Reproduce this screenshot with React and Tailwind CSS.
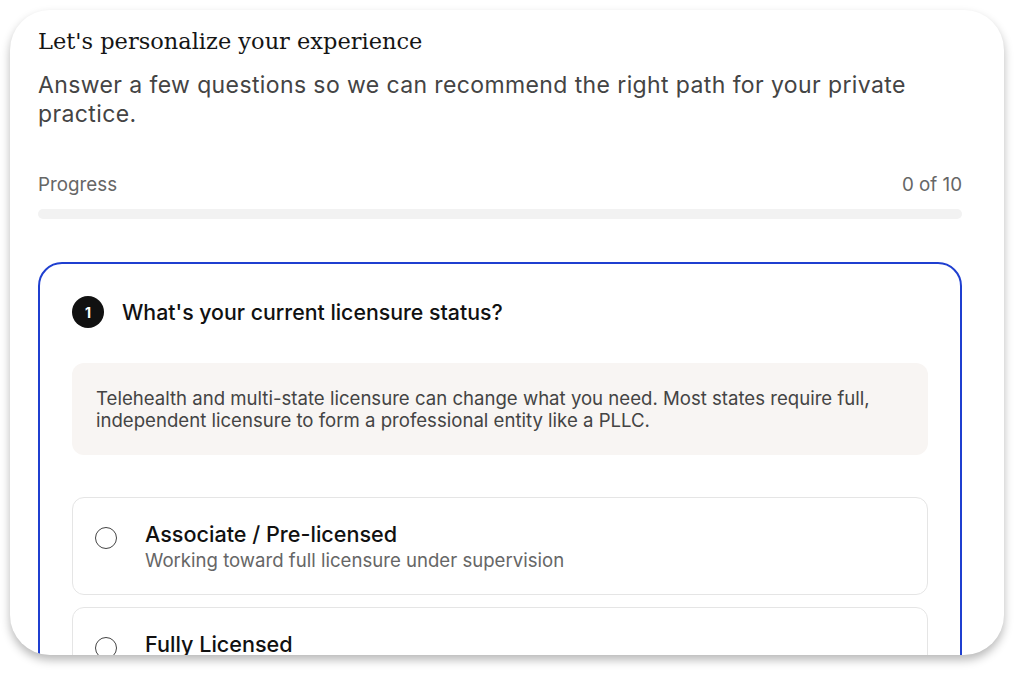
export default function App() {
  const opcoes = [
    { titulo: "Associate / Pre-licensed", desc: "Working toward full licensure under supervision" },
    { titulo: "Fully Licensed", desc: "Independent licensure in at least one state" },
  ];

  return (
    <div className="w-[1014px] h-[675px] bg-white pt-[10px] px-[10px]" style={{ fontFamily: "Inter, 'Noto Sans', sans-serif" }}>
      <div className="h-[645px] rounded-[40px] bg-white overflow-hidden shadow-[0_5px_10px_rgba(0,0,0,0.28)] pl-[28px] pr-[42px] pt-[17px]">
        <h1 className="text-[22.5px] leading-[28px] text-[#151515]" style={{ fontFamily: "'DejaVu Serif', serif" }}>
          Let's personalize your experience
        </h1>
        <p className="mt-[16px] text-[23px] leading-[29px] tracking-[0.017em] text-[#444]">
          Answer a few questions so we can recommend the right path for your private practice.
        </p>

        <div className="mt-[44px] flex justify-between text-[18.8px] leading-[24px] text-[#666]">
          <span>Progress</span>
          <span>0 of 10</span>
        </div>
        <div className="mt-[12px] h-[10px] rounded-full bg-[#f2f2f2]"></div>

        <div className="mt-[43px] border-2 border-[#1f3fd0] rounded-[24px] px-8 pt-[32px] pb-10">
          <div className="flex items-center gap-[18px]">
            <div className="w-8 h-8 rounded-full bg-[#111] text-white flex items-center justify-center text-[14px] font-bold">
              1
            </div>
            <h2 className="text-[21.3px] leading-[28px] font-medium text-[#111]">
              What's your current licensure status?
            </h2>
          </div>

          <div className="mt-[35px] bg-[#f8f5f3] rounded-xl px-6 py-6 text-[18.6px] leading-[22px] text-[#444]">
            Telehealth and multi-state licensure can change what you need. Most states require full,
            independent licensure to form a professional entity like a PLLC.
          </div>

          <div className="mt-[42px] flex flex-col gap-3">
            {opcoes.map((o) => (
              <div key={o.titulo} className="border border-[#e5e5e5] rounded-xl px-[22px] py-[22px] flex items-start gap-[28px]">
                <div className="mt-[7px] w-[22px] h-[22px] rounded-full border-[1.5px] border-[#444] shrink-0"></div>
                <div>
                  <div className="text-[21.6px] leading-[28px] font-medium text-[#111]">{o.titulo}</div>
                  <div className="text-[18.6px] leading-[24px] text-[#666]">{o.desc}</div>
                </div>
              </div>
            ))}
          </div>
        </div>
      </div>
    </div>
  );
}
